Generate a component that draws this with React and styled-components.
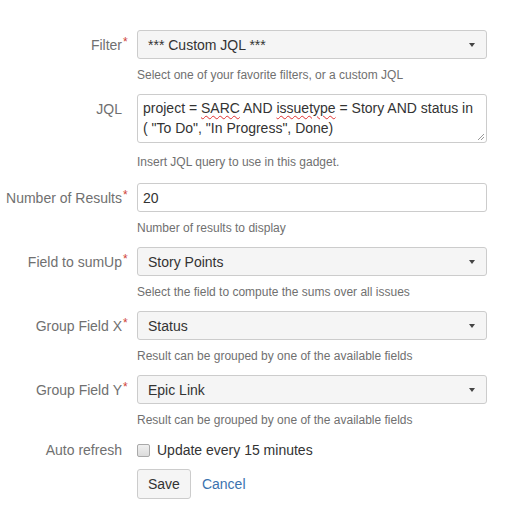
import React from 'react';
import styled, { createGlobalStyle } from 'styled-components';

const GlobalStyle = createGlobalStyle`
  body {
    margin: 0;
    background: #fff;
    font-family: "Liberation Sans", Arial, sans-serif;
  }
`;

const Form = styled.form`
  padding-top: 30px;
  width: 531px;
`;

const Row = styled.div`
  display: grid;
  grid-template-columns: 137px 350px;
  margin-bottom: ${p => p.gap || 11}px;
`;

const Label = styled.div`
  text-align: right;
  padding: 5px 15px 0 0;
  font-size: 14px;
  line-height: 20px;
  color: #707070;
`;

const LabelText = styled.span`
  position: relative;
`;

const Required = styled.span`
  position: absolute;
  left: 100%;
  top: -5px;
  margin-left: 1px;
  color: #d04437;
  font-size: 12px;
`;

const Field = styled.div`
  display: flex;
  flex-direction: column;
`;

const Box = styled.div`
  box-sizing: border-box;
  height: 29px;
  border: 1px solid #ccc;
  border-radius: 3px;
  background: ${p => (p.select ? '#f5f5f5' : '#fff')};
  display: flex;
  align-items: center;
  padding: 0 ${p => (p.select ? 11 : 9)}px 0 ${p => (p.select ? 10 : 5)}px;
  font-size: 14px;
  color: #333;
`;

const BoxText = styled.span`
  flex: 1;
`;

const Caret = styled.span`
  width: 0;
  height: 0;
  border-left: 3.5px solid transparent;
  border-right: 3.5px solid transparent;
  border-top: 4px solid #444;
`;

const Area = styled.div`
  box-sizing: border-box;
  height: 49px;
  border: 1px solid #ccc;
  border-radius: 3px;
  background: #fff;
  padding: 3px 5px;
  font-size: 14px;
  line-height: 20px;
  color: #333;
  position: relative;
`;

const Misspelt = styled.span`
  text-decoration: underline wavy #e03030;
  text-decoration-thickness: 1px;
  text-underline-offset: 2px;
`;

const Grip = styled.svg`
  position: absolute;
  right: 1px;
  bottom: 1px;
`;

const Desc = styled.div`
  margin-top: ${p => p.top || 8}px;
  font-size: 12px;
  line-height: 16px;
  color: #707070;
`;

const CheckLine = styled.label`
  display: flex;
  align-items: center;
  height: 30px;
  font-size: 14px;
  color: #333;
`;

const Check = styled.span`
  box-sizing: border-box;
  width: 13px;
  height: 13px;
  border: 1px solid #a9a9a9;
  border-radius: 2px;
  background: linear-gradient(#f0f0f0, #dcdcdc);
  margin-right: 7px;
`;

const Actions = styled.div`
  display: flex;
  align-items: center;
  gap: 11px;
`;

const Button = styled.button`
  box-sizing: border-box;
  height: 30px;
  padding: 0 10px;
  border: 1px solid #ccc;
  border-radius: 3px;
  background: #f5f5f5;
  font-family: inherit;
  font-size: 14px;
  color: #333;
`;

const LinkButton = styled.a`
  font-size: 14px;
  color: #3b73af;
  text-decoration: none;
`;

const FieldLabel = ({ text, required }) => (
  <Label>
    <LabelText>
      {text}
      {required && <Required>*</Required>}
    </LabelText>
  </Label>
);

const SelectRow = ({ label, value, desc, gap }) => (
  <Row gap={gap}>
    <FieldLabel text={label} required />
    <Field>
      <Box select>
        <BoxText>{value}</BoxText>
        <Caret />
      </Box>
      <Desc>{desc}</Desc>
    </Field>
  </Row>
);

export default function App() {
  return (
    <>
      <GlobalStyle />
      <Form>
        <SelectRow
          label="Filter"
          value="*** Custom JQL ***"
          desc="Select one of your favorite filters, or a custom JQL"
        />
        <Row gap={13}>
          <FieldLabel text="JQL" />
          <Field>
            <Area>
              project = <Misspelt>SARC</Misspelt> AND <Misspelt>issuetype</Misspelt> = Story AND status in
              <br />
              ( "To Do", "In Progress", Done)
              <Grip width="8" height="8" viewBox="0 0 8 8">
                <path d="M7 1 L1 7 M7 4 L4 7" stroke="#999" strokeWidth="1" />
              </Grip>
            </Area>
            <Desc top={11}>Insert JQL query to use in this gadget.</Desc>
          </Field>
        </Row>
        <Row>
          <FieldLabel text="Number of Results" required />
          <Field>
            <Box>
              <BoxText>20</BoxText>
            </Box>
            <Desc>Number of results to display</Desc>
          </Field>
        </Row>
        <SelectRow
          label="Field to sumUp"
          value="Story Points"
          desc="Select the field to compute the sums over all issues"
        />
        <SelectRow
          label="Group Field X"
          value="Status"
          desc="Result can be grouped by one of the available fields"
        />
        <SelectRow
          label="Group Field Y"
          value="Epic Link"
          desc="Result can be grouped by one of the available fields"
          gap={7}
        />
        <Row gap={4}>
          <Label>Auto refresh</Label>
          <CheckLine>
            <Check />
            Update every 15 minutes
          </CheckLine>
        </Row>
        <Row>
          <div />
          <Actions>
            <Button type="button">Save</Button>
            <LinkButton href="#">Cancel</LinkButton>
          </Actions>
        </Row>
      </Form>
    </>
  );
}
